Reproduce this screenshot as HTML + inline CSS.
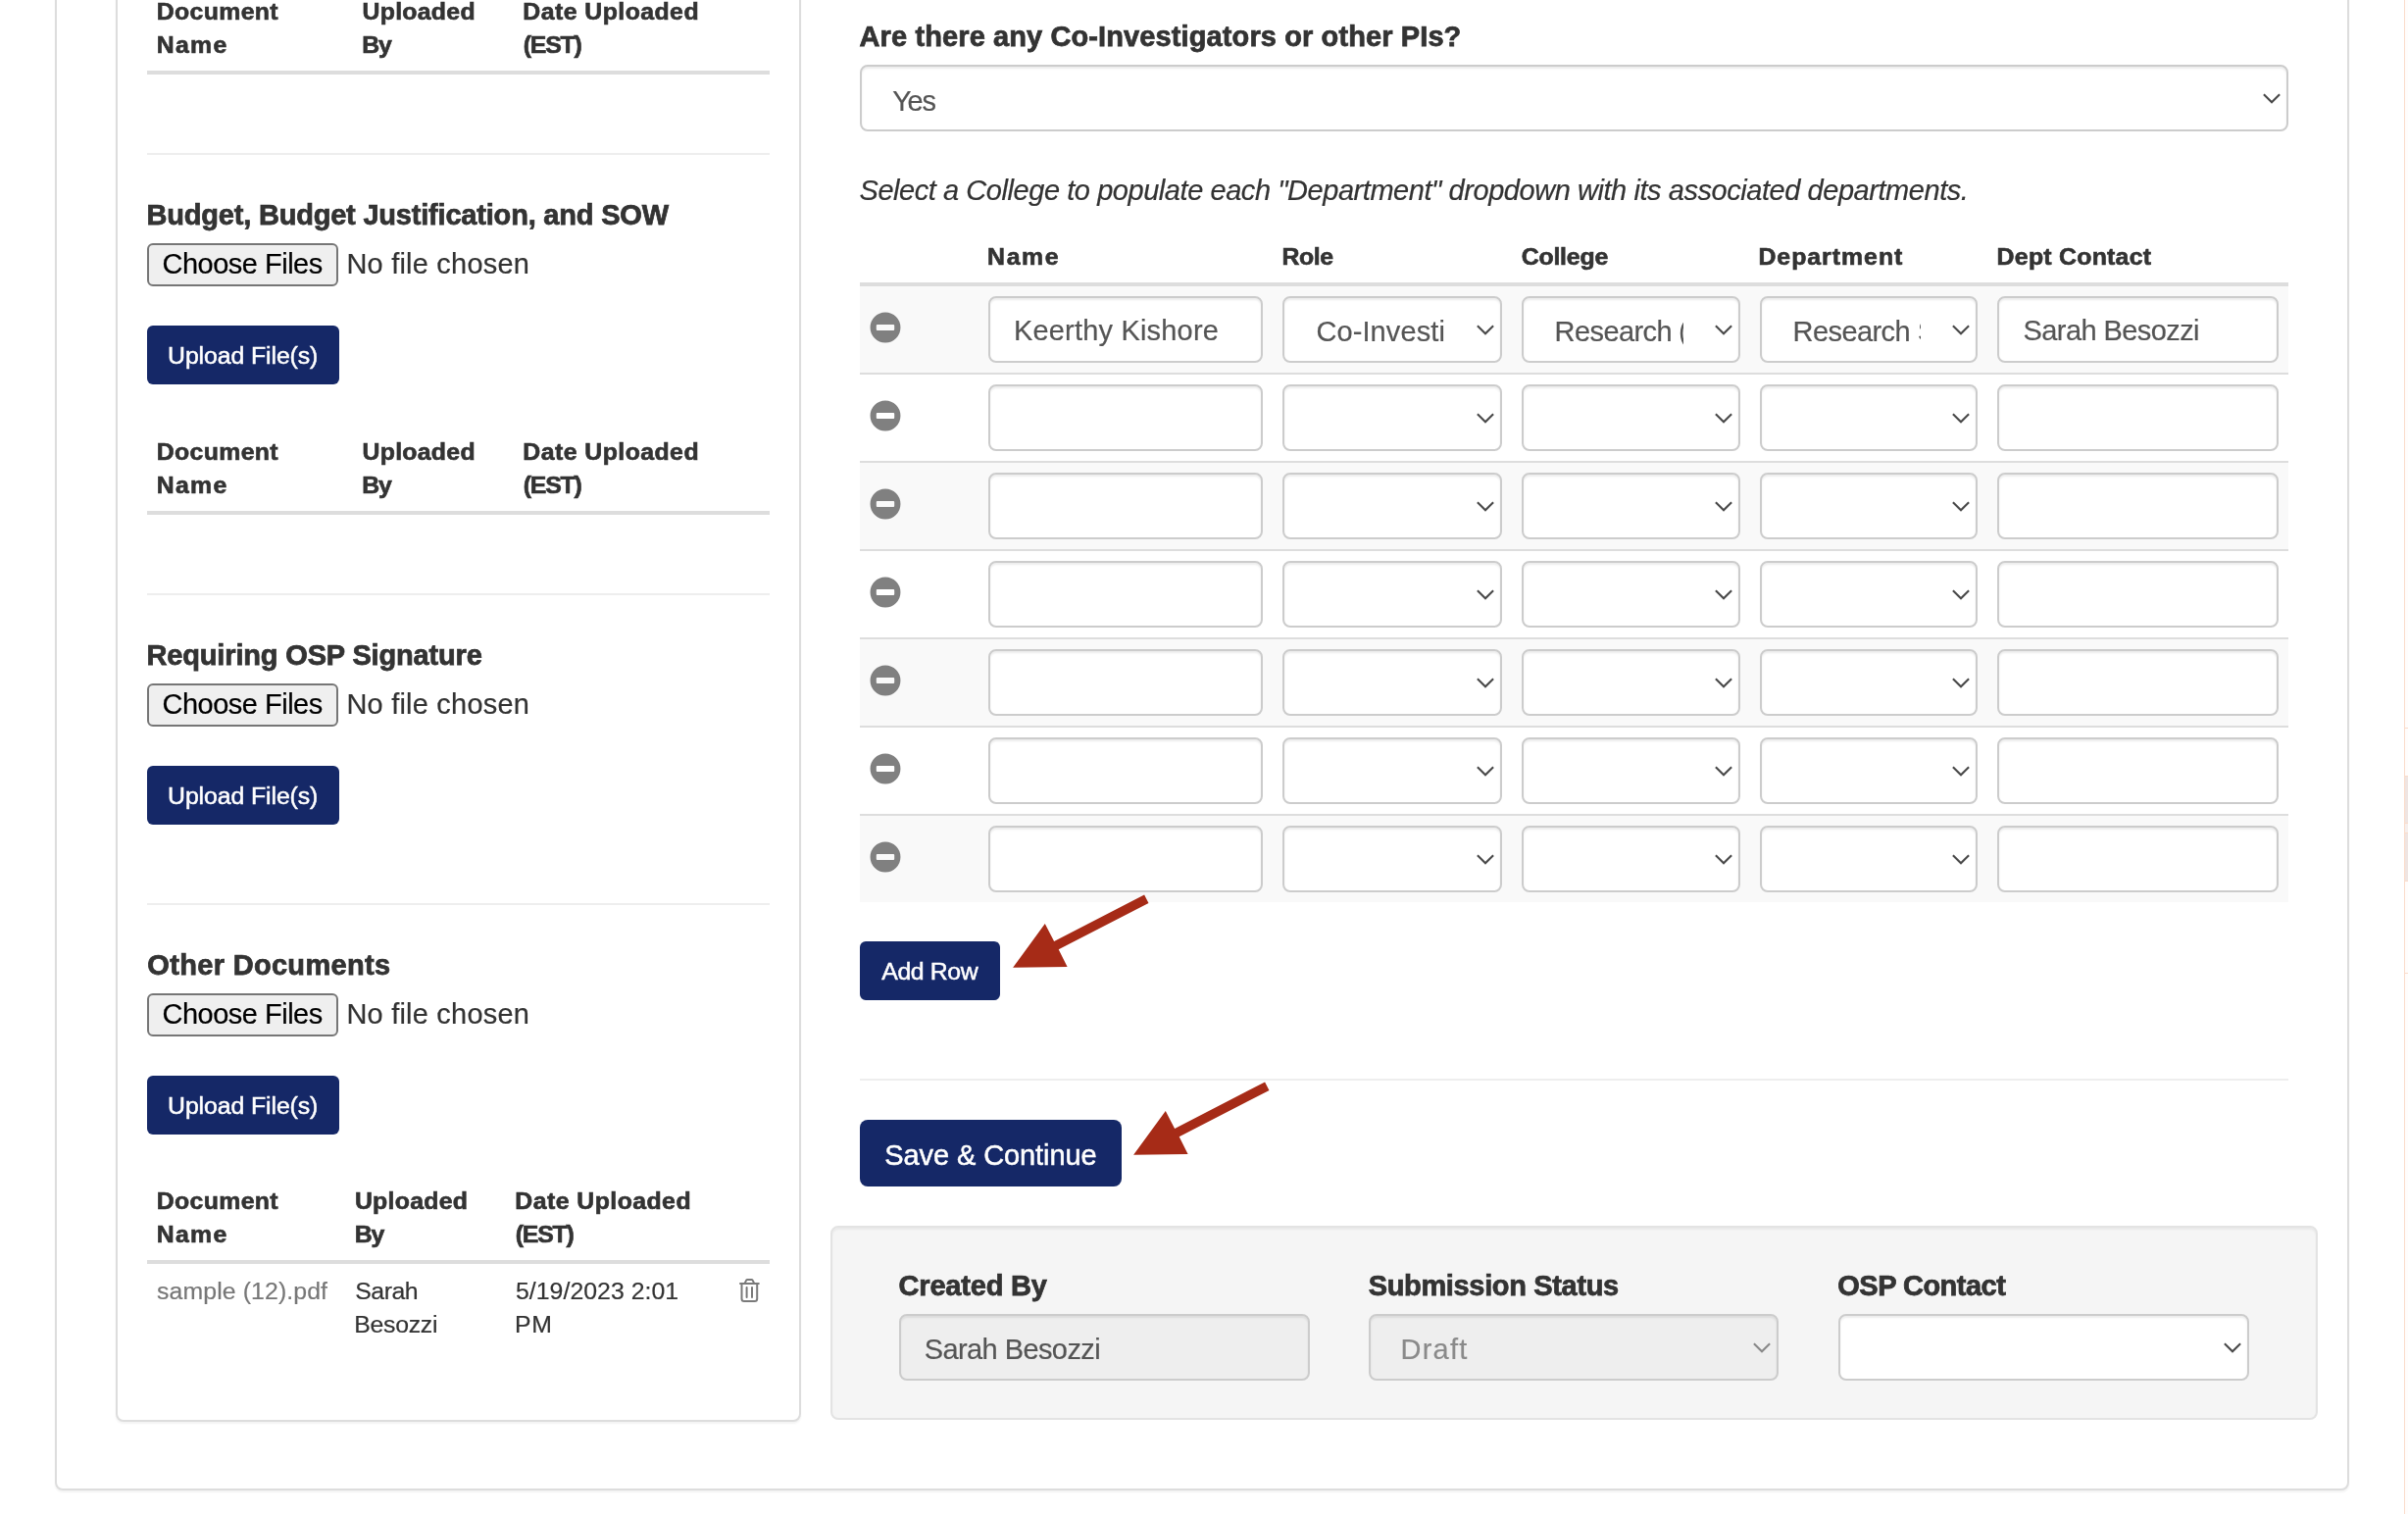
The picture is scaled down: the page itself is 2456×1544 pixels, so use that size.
<!DOCTYPE html>
<html lang="en"><head><meta charset="utf-8"><title>Proposal form</title>
<style>
html,body{margin:0;padding:0;background:#fff;font-family:"Liberation Sans",sans-serif;}
body{width:2456px;height:1544px;position:relative;overflow:hidden;font-family:"Liberation Sans",sans-serif;}
div,span.t,svg.a{position:absolute;box-sizing:border-box;}
#w{left:0;top:0;width:2456px;height:1544px;will-change:transform;}
.t{white-space:pre;line-height:40px;height:40px;}
.panel{background:#fff;border:2px solid #ddd;border-radius:8px;box-shadow:0 2px 2px rgba(0,0,0,.05);}
.inp{background:#fff;border:2px solid #ccc;border-radius:8px;box-shadow:inset 0 2px 2px rgba(0,0,0,.075);}
.inp.dis{background:#eee;}
.chev{position:absolute;right:4px;top:25.8px;}
.btn{background:#152867;}
.filebtn{background:#efefef;border:2px solid #767676;border-radius:6px;}
.well{background:#f5f5f5;border:2px solid #e3e3e3;border-radius:8px;box-shadow:inset 0 2px 2px rgba(0,0,0,.05);}
.clip{overflow:hidden;}
</style></head>
<body>
<div id="w">
<div class="panel" style="left:56px;top:-40px;width:2340px;height:1560px;"></div>
<div class="panel" style="left:118px;top:-40px;width:699px;height:1490px;"></div>
<span class="t" style="left:159.72px;top:-8.01px;font-size:24.84px;color:#333;letter-spacing:0.360px;font-weight:bold;-webkit-text-stroke:0.65px;">Document</span>
<span class="t" style="left:159.72px;top:25.79px;font-size:24.84px;color:#333;letter-spacing:1.286px;font-weight:bold;-webkit-text-stroke:0.65px;">Name</span>
<span class="t" style="left:369.51px;top:-8.01px;font-size:24.84px;color:#333;letter-spacing:0.280px;font-weight:bold;-webkit-text-stroke:0.65px;">Uploaded</span>
<span class="t" style="left:369.32px;top:25.79px;font-size:24.84px;color:#333;letter-spacing:-1.200px;font-weight:bold;-webkit-text-stroke:0.65px;">By</span>
<span class="t" style="left:533.32px;top:-8.01px;font-size:24.84px;color:#333;letter-spacing:0.451px;font-weight:bold;-webkit-text-stroke:0.65px;">Date Uploaded</span>
<span class="t" style="left:533.76px;top:25.79px;font-size:24.84px;color:#333;letter-spacing:-1.200px;font-weight:bold;-webkit-text-stroke:0.65px;">(EST)</span>
<div style="left:150px;top:72px;width:635px;height:4px;background:#ddd;"></div>
<div style="left:150px;top:156px;width:635px;height:2px;background:#eee;"></div>
<span class="t" style="left:149.54px;top:199.16px;font-size:28.98px;color:#333;letter-spacing:-0.185px;font-weight:bold;-webkit-text-stroke:0.75px;">Budget, Budget Justification, and SOW</span>
<div class="filebtn" style="left:150px;top:248px;width:195px;height:44px;"></div>
<span class="t" style="left:165.55px;top:249.26px;font-size:28.98px;color:#000;letter-spacing:-0.494px;-webkit-text-stroke:0.2px;">Choose Files</span>
<span class="t" style="left:353.41px;top:249.26px;font-size:28.98px;color:#333;letter-spacing:0.224px;-webkit-text-stroke:0.2px;">No file chosen</span>
<div class="btn" style="left:150px;top:332px;width:196px;height:60px;border-radius:6px;"></div>
<span class="t" style="left:171.07px;top:342.89px;font-size:24.84px;color:#fff;letter-spacing:-0.093px;-webkit-text-stroke:0.2px;-webkit-text-stroke:0.5px;">Upload File(s)</span>
<span class="t" style="left:159.72px;top:440.99px;font-size:24.84px;color:#333;letter-spacing:0.360px;font-weight:bold;-webkit-text-stroke:0.65px;">Document</span>
<span class="t" style="left:159.72px;top:474.79px;font-size:24.84px;color:#333;letter-spacing:1.286px;font-weight:bold;-webkit-text-stroke:0.65px;">Name</span>
<span class="t" style="left:369.51px;top:440.99px;font-size:24.84px;color:#333;letter-spacing:0.280px;font-weight:bold;-webkit-text-stroke:0.65px;">Uploaded</span>
<span class="t" style="left:369.32px;top:474.79px;font-size:24.84px;color:#333;letter-spacing:-1.200px;font-weight:bold;-webkit-text-stroke:0.65px;">By</span>
<span class="t" style="left:533.32px;top:440.99px;font-size:24.84px;color:#333;letter-spacing:0.451px;font-weight:bold;-webkit-text-stroke:0.65px;">Date Uploaded</span>
<span class="t" style="left:533.76px;top:474.79px;font-size:24.84px;color:#333;letter-spacing:-1.200px;font-weight:bold;-webkit-text-stroke:0.65px;">(EST)</span>
<div style="left:150px;top:521px;width:635px;height:4px;background:#ddd;"></div>
<div style="left:150px;top:605px;width:635px;height:2px;background:#eee;"></div>
<span class="t" style="left:149.54px;top:648.16px;font-size:28.98px;color:#333;letter-spacing:-0.148px;font-weight:bold;-webkit-text-stroke:0.75px;">Requiring OSP Signature</span>
<div class="filebtn" style="left:150px;top:697px;width:195px;height:44px;"></div>
<span class="t" style="left:165.55px;top:698.26px;font-size:28.98px;color:#000;letter-spacing:-0.494px;-webkit-text-stroke:0.2px;">Choose Files</span>
<span class="t" style="left:353.41px;top:698.26px;font-size:28.98px;color:#333;letter-spacing:0.224px;-webkit-text-stroke:0.2px;">No file chosen</span>
<div class="btn" style="left:150px;top:781px;width:196px;height:60px;border-radius:6px;"></div>
<span class="t" style="left:171.07px;top:791.89px;font-size:24.84px;color:#fff;letter-spacing:-0.093px;-webkit-text-stroke:0.2px;-webkit-text-stroke:0.5px;">Upload File(s)</span>
<div style="left:150px;top:921px;width:635px;height:2px;background:#eee;"></div>
<span class="t" style="left:150.34px;top:964.16px;font-size:28.98px;color:#333;letter-spacing:0.334px;font-weight:bold;-webkit-text-stroke:0.75px;">Other Documents</span>
<div class="filebtn" style="left:150px;top:1013px;width:195px;height:44px;"></div>
<span class="t" style="left:165.55px;top:1014.26px;font-size:28.98px;color:#000;letter-spacing:-0.494px;-webkit-text-stroke:0.2px;">Choose Files</span>
<span class="t" style="left:353.41px;top:1014.26px;font-size:28.98px;color:#333;letter-spacing:0.224px;-webkit-text-stroke:0.2px;">No file chosen</span>
<div class="btn" style="left:150px;top:1097px;width:196px;height:60px;border-radius:6px;"></div>
<span class="t" style="left:171.07px;top:1107.89px;font-size:24.84px;color:#fff;letter-spacing:-0.093px;-webkit-text-stroke:0.2px;-webkit-text-stroke:0.5px;">Upload File(s)</span>
<span class="t" style="left:159.72px;top:1204.99px;font-size:24.84px;color:#333;letter-spacing:0.360px;font-weight:bold;-webkit-text-stroke:0.65px;">Document</span>
<span class="t" style="left:159.72px;top:1238.79px;font-size:24.84px;color:#333;letter-spacing:1.286px;font-weight:bold;-webkit-text-stroke:0.65px;">Name</span>
<span class="t" style="left:361.91px;top:1204.99px;font-size:24.84px;color:#333;letter-spacing:0.280px;font-weight:bold;-webkit-text-stroke:0.65px;">Uploaded</span>
<span class="t" style="left:361.72px;top:1238.79px;font-size:24.84px;color:#333;letter-spacing:-1.200px;font-weight:bold;-webkit-text-stroke:0.65px;">By</span>
<span class="t" style="left:525.32px;top:1204.99px;font-size:24.84px;color:#333;letter-spacing:0.451px;font-weight:bold;-webkit-text-stroke:0.65px;">Date Uploaded</span>
<span class="t" style="left:525.76px;top:1238.79px;font-size:24.84px;color:#333;letter-spacing:-1.200px;font-weight:bold;-webkit-text-stroke:0.65px;">(EST)</span>
<div style="left:150px;top:1285px;width:635px;height:4px;background:#ddd;"></div>
<span class="t" style="left:160.12px;top:1296.89px;font-size:24.84px;color:#777;letter-spacing:0.096px;-webkit-text-stroke:0.2px;">sample (12).pdf</span>
<span class="t" style="left:362.28px;top:1296.89px;font-size:24.84px;color:#333;letter-spacing:-0.498px;-webkit-text-stroke:0.2px;">Sarah</span>
<span class="t" style="left:361.35px;top:1331.19px;font-size:24.84px;color:#333;letter-spacing:-0.313px;-webkit-text-stroke:0.2px;">Besozzi</span>
<span class="t" style="left:526.01px;top:1296.89px;font-size:24.84px;color:#333;letter-spacing:0.033px;-webkit-text-stroke:0.2px;">5/19/2023 2:01</span>
<span class="t" style="left:524.95px;top:1331.19px;font-size:24.84px;color:#333;letter-spacing:0.639px;-webkit-text-stroke:0.2px;">PM</span>
<svg class="a" style="left:750px;top:1300px" width="30" height="32" viewBox="750 1300 30 32" fill="none" stroke="#7a7a7a" stroke-width="2" stroke-linecap="round" stroke-linejoin="round">
<path d="M755 1309H773.8"/><path d="M756.5 1309V1324.4a2.5 2.5 0 0 0 2.5 2.5H769.7a2.5 2.5 0 0 0 2.5-2.5V1309"/>
<path d="M759.6 1308.6L761.2 1305.6Q761.6 1305 762.4 1305H766.4Q767.2 1305 767.6 1305.6L769.2 1308.6"/>
<path d="M761.6 1313V1323"/><path d="M767 1313V1323"/></svg>
<span class="t" style="left:876.58px;top:16.76px;font-size:28.98px;color:#333;letter-spacing:0.122px;font-weight:bold;-webkit-text-stroke:0.75px;">Are there any Co-Investigators or other PIs?</span>
<div class="inp" style="left:877px;top:66px;width:1457px;height:68px;"><svg class="chev" width="22" height="14" viewBox="0 0 22 14"><path d="M2.9 2.2L11 10.3L19.1 2.2" fill="none" stroke="#494949" stroke-width="2.1"/></svg></div>
<span class="t" style="left:910.15px;top:82.56px;font-size:28.98px;color:#555;letter-spacing:-1.200px;-webkit-text-stroke:0.2px;">Yes</span>
<span class="t" style="left:876.50px;top:173.86px;font-size:28.98px;color:#333;letter-spacing:-0.429px;font-style:italic;-webkit-text-stroke:0.2px;">Select a College to populate each &quot;Department&quot; dropdown with its associated departments.</span>
<span class="t" style="left:1007.12px;top:241.59px;font-size:24.84px;color:#333;letter-spacing:1.619px;font-weight:bold;-webkit-text-stroke:0.65px;">Name</span>
<span class="t" style="left:1307.52px;top:241.59px;font-size:24.84px;color:#333;letter-spacing:-0.432px;font-weight:bold;-webkit-text-stroke:0.65px;">Role</span>
<span class="t" style="left:1551.71px;top:241.59px;font-size:24.84px;color:#333;letter-spacing:-0.195px;font-weight:bold;-webkit-text-stroke:0.65px;">College</span>
<span class="t" style="left:1793.42px;top:241.59px;font-size:24.84px;color:#333;letter-spacing:0.993px;font-weight:bold;-webkit-text-stroke:0.65px;">Department</span>
<span class="t" style="left:2036.62px;top:241.59px;font-size:24.84px;color:#333;letter-spacing:0.265px;font-weight:bold;-webkit-text-stroke:0.65px;">Dept Contact</span>
<div style="left:877px;top:288px;width:1457px;height:4px;background:#ddd;"></div>
<div style="left:877px;top:292px;width:1457px;height:88px;background:#f9f9f9;"></div>
<svg class="a" style="left:886.65px;top:317.75px" width="32" height="32" viewBox="0 0 32 32"><path fill="#808080" fill-rule="evenodd" d="M16 0.55a15.45 15.45 0 1 0 0 30.9a15.45 15.45 0 1 0 0-30.9zM7.8 13.1h16.4a1 1 0 0 1 1 1v3.8a1 1 0 0 1-1 1H7.8a1 1 0 0 1-1-1v-3.8a1 1 0 0 1 1-1z"/></svg>
<div class="inp" style="left:1008px;top:302px;width:280px;height:68px;"></div>
<div class="inp" style="left:1308px;top:302px;width:224px;height:68px;"><svg class="chev" width="22" height="14" viewBox="0 0 22 14"><path d="M2.9 2.2L11 10.3L19.1 2.2" fill="none" stroke="#494949" stroke-width="2.1"/></svg></div>
<div class="inp" style="left:1552px;top:302px;width:223px;height:68px;"><svg class="chev" width="22" height="14" viewBox="0 0 22 14"><path d="M2.9 2.2L11 10.3L19.1 2.2" fill="none" stroke="#494949" stroke-width="2.1"/></svg></div>
<div class="inp" style="left:1795px;top:302px;width:222px;height:68px;"><svg class="chev" width="22" height="14" viewBox="0 0 22 14"><path d="M2.9 2.2L11 10.3L19.1 2.2" fill="none" stroke="#494949" stroke-width="2.1"/></svg></div>
<div class="inp" style="left:2037px;top:302px;width:287px;height:68px;"></div>
<div style="left:877px;top:380px;width:1457px;height:2px;background:#ddd;"></div>
<svg class="a" style="left:886.65px;top:407.75px" width="32" height="32" viewBox="0 0 32 32"><path fill="#808080" fill-rule="evenodd" d="M16 0.55a15.45 15.45 0 1 0 0 30.9a15.45 15.45 0 1 0 0-30.9zM7.8 13.1h16.4a1 1 0 0 1 1 1v3.8a1 1 0 0 1-1 1H7.8a1 1 0 0 1-1-1v-3.8a1 1 0 0 1 1-1z"/></svg>
<div class="inp" style="left:1008px;top:392px;width:280px;height:68px;"></div>
<div class="inp" style="left:1308px;top:392px;width:224px;height:68px;"><svg class="chev" width="22" height="14" viewBox="0 0 22 14"><path d="M2.9 2.2L11 10.3L19.1 2.2" fill="none" stroke="#494949" stroke-width="2.1"/></svg></div>
<div class="inp" style="left:1552px;top:392px;width:223px;height:68px;"><svg class="chev" width="22" height="14" viewBox="0 0 22 14"><path d="M2.9 2.2L11 10.3L19.1 2.2" fill="none" stroke="#494949" stroke-width="2.1"/></svg></div>
<div class="inp" style="left:1795px;top:392px;width:222px;height:68px;"><svg class="chev" width="22" height="14" viewBox="0 0 22 14"><path d="M2.9 2.2L11 10.3L19.1 2.2" fill="none" stroke="#494949" stroke-width="2.1"/></svg></div>
<div class="inp" style="left:2037px;top:392px;width:287px;height:68px;"></div>
<div style="left:877px;top:470px;width:1457px;height:2px;background:#ddd;"></div>
<div style="left:877px;top:472px;width:1457px;height:88px;background:#f9f9f9;"></div>
<svg class="a" style="left:886.65px;top:497.75px" width="32" height="32" viewBox="0 0 32 32"><path fill="#808080" fill-rule="evenodd" d="M16 0.55a15.45 15.45 0 1 0 0 30.9a15.45 15.45 0 1 0 0-30.9zM7.8 13.1h16.4a1 1 0 0 1 1 1v3.8a1 1 0 0 1-1 1H7.8a1 1 0 0 1-1-1v-3.8a1 1 0 0 1 1-1z"/></svg>
<div class="inp" style="left:1008px;top:482px;width:280px;height:68px;"></div>
<div class="inp" style="left:1308px;top:482px;width:224px;height:68px;"><svg class="chev" width="22" height="14" viewBox="0 0 22 14"><path d="M2.9 2.2L11 10.3L19.1 2.2" fill="none" stroke="#494949" stroke-width="2.1"/></svg></div>
<div class="inp" style="left:1552px;top:482px;width:223px;height:68px;"><svg class="chev" width="22" height="14" viewBox="0 0 22 14"><path d="M2.9 2.2L11 10.3L19.1 2.2" fill="none" stroke="#494949" stroke-width="2.1"/></svg></div>
<div class="inp" style="left:1795px;top:482px;width:222px;height:68px;"><svg class="chev" width="22" height="14" viewBox="0 0 22 14"><path d="M2.9 2.2L11 10.3L19.1 2.2" fill="none" stroke="#494949" stroke-width="2.1"/></svg></div>
<div class="inp" style="left:2037px;top:482px;width:287px;height:68px;"></div>
<div style="left:877px;top:560px;width:1457px;height:2px;background:#ddd;"></div>
<svg class="a" style="left:886.65px;top:587.75px" width="32" height="32" viewBox="0 0 32 32"><path fill="#808080" fill-rule="evenodd" d="M16 0.55a15.45 15.45 0 1 0 0 30.9a15.45 15.45 0 1 0 0-30.9zM7.8 13.1h16.4a1 1 0 0 1 1 1v3.8a1 1 0 0 1-1 1H7.8a1 1 0 0 1-1-1v-3.8a1 1 0 0 1 1-1z"/></svg>
<div class="inp" style="left:1008px;top:572px;width:280px;height:68px;"></div>
<div class="inp" style="left:1308px;top:572px;width:224px;height:68px;"><svg class="chev" width="22" height="14" viewBox="0 0 22 14"><path d="M2.9 2.2L11 10.3L19.1 2.2" fill="none" stroke="#494949" stroke-width="2.1"/></svg></div>
<div class="inp" style="left:1552px;top:572px;width:223px;height:68px;"><svg class="chev" width="22" height="14" viewBox="0 0 22 14"><path d="M2.9 2.2L11 10.3L19.1 2.2" fill="none" stroke="#494949" stroke-width="2.1"/></svg></div>
<div class="inp" style="left:1795px;top:572px;width:222px;height:68px;"><svg class="chev" width="22" height="14" viewBox="0 0 22 14"><path d="M2.9 2.2L11 10.3L19.1 2.2" fill="none" stroke="#494949" stroke-width="2.1"/></svg></div>
<div class="inp" style="left:2037px;top:572px;width:287px;height:68px;"></div>
<div style="left:877px;top:650px;width:1457px;height:2px;background:#ddd;"></div>
<div style="left:877px;top:652px;width:1457px;height:88px;background:#f9f9f9;"></div>
<svg class="a" style="left:886.65px;top:677.75px" width="32" height="32" viewBox="0 0 32 32"><path fill="#808080" fill-rule="evenodd" d="M16 0.55a15.45 15.45 0 1 0 0 30.9a15.45 15.45 0 1 0 0-30.9zM7.8 13.1h16.4a1 1 0 0 1 1 1v3.8a1 1 0 0 1-1 1H7.8a1 1 0 0 1-1-1v-3.8a1 1 0 0 1 1-1z"/></svg>
<div class="inp" style="left:1008px;top:662px;width:280px;height:68px;"></div>
<div class="inp" style="left:1308px;top:662px;width:224px;height:68px;"><svg class="chev" width="22" height="14" viewBox="0 0 22 14"><path d="M2.9 2.2L11 10.3L19.1 2.2" fill="none" stroke="#494949" stroke-width="2.1"/></svg></div>
<div class="inp" style="left:1552px;top:662px;width:223px;height:68px;"><svg class="chev" width="22" height="14" viewBox="0 0 22 14"><path d="M2.9 2.2L11 10.3L19.1 2.2" fill="none" stroke="#494949" stroke-width="2.1"/></svg></div>
<div class="inp" style="left:1795px;top:662px;width:222px;height:68px;"><svg class="chev" width="22" height="14" viewBox="0 0 22 14"><path d="M2.9 2.2L11 10.3L19.1 2.2" fill="none" stroke="#494949" stroke-width="2.1"/></svg></div>
<div class="inp" style="left:2037px;top:662px;width:287px;height:68px;"></div>
<div style="left:877px;top:740px;width:1457px;height:2px;background:#ddd;"></div>
<svg class="a" style="left:886.65px;top:767.75px" width="32" height="32" viewBox="0 0 32 32"><path fill="#808080" fill-rule="evenodd" d="M16 0.55a15.45 15.45 0 1 0 0 30.9a15.45 15.45 0 1 0 0-30.9zM7.8 13.1h16.4a1 1 0 0 1 1 1v3.8a1 1 0 0 1-1 1H7.8a1 1 0 0 1-1-1v-3.8a1 1 0 0 1 1-1z"/></svg>
<div class="inp" style="left:1008px;top:752px;width:280px;height:68px;"></div>
<div class="inp" style="left:1308px;top:752px;width:224px;height:68px;"><svg class="chev" width="22" height="14" viewBox="0 0 22 14"><path d="M2.9 2.2L11 10.3L19.1 2.2" fill="none" stroke="#494949" stroke-width="2.1"/></svg></div>
<div class="inp" style="left:1552px;top:752px;width:223px;height:68px;"><svg class="chev" width="22" height="14" viewBox="0 0 22 14"><path d="M2.9 2.2L11 10.3L19.1 2.2" fill="none" stroke="#494949" stroke-width="2.1"/></svg></div>
<div class="inp" style="left:1795px;top:752px;width:222px;height:68px;"><svg class="chev" width="22" height="14" viewBox="0 0 22 14"><path d="M2.9 2.2L11 10.3L19.1 2.2" fill="none" stroke="#494949" stroke-width="2.1"/></svg></div>
<div class="inp" style="left:2037px;top:752px;width:287px;height:68px;"></div>
<div style="left:877px;top:830px;width:1457px;height:2px;background:#ddd;"></div>
<div style="left:877px;top:832px;width:1457px;height:88px;background:#f9f9f9;"></div>
<svg class="a" style="left:886.65px;top:857.75px" width="32" height="32" viewBox="0 0 32 32"><path fill="#808080" fill-rule="evenodd" d="M16 0.55a15.45 15.45 0 1 0 0 30.9a15.45 15.45 0 1 0 0-30.9zM7.8 13.1h16.4a1 1 0 0 1 1 1v3.8a1 1 0 0 1-1 1H7.8a1 1 0 0 1-1-1v-3.8a1 1 0 0 1 1-1z"/></svg>
<div class="inp" style="left:1008px;top:842px;width:280px;height:68px;"></div>
<div class="inp" style="left:1308px;top:842px;width:224px;height:68px;"><svg class="chev" width="22" height="14" viewBox="0 0 22 14"><path d="M2.9 2.2L11 10.3L19.1 2.2" fill="none" stroke="#494949" stroke-width="2.1"/></svg></div>
<div class="inp" style="left:1552px;top:842px;width:223px;height:68px;"><svg class="chev" width="22" height="14" viewBox="0 0 22 14"><path d="M2.9 2.2L11 10.3L19.1 2.2" fill="none" stroke="#494949" stroke-width="2.1"/></svg></div>
<div class="inp" style="left:1795px;top:842px;width:222px;height:68px;"><svg class="chev" width="22" height="14" viewBox="0 0 22 14"><path d="M2.9 2.2L11 10.3L19.1 2.2" fill="none" stroke="#494949" stroke-width="2.1"/></svg></div>
<div class="inp" style="left:2037px;top:842px;width:287px;height:68px;"></div>
<span class="t" style="left:1033.91px;top:317.46px;font-size:28.98px;color:#555;letter-spacing:0.202px;-webkit-text-stroke:0.2px;">Keerthy Kishore</span>
<span class="t" style="left:1342.45px;top:317.86px;font-size:28.98px;color:#555;letter-spacing:0.114px;-webkit-text-stroke:0.2px;">Co-Investi</span>
<span class="t" style="left:1585.61px;top:317.86px;font-size:28.98px;color:#555;letter-spacing:-0.580px;-webkit-text-stroke:0.2px;">Research</span>
<div class="clip" style="left:1709.80px;top:317.86px;width:7.40px;height:40px"><span class="t" style="left:2.19px;top:0;font-size:28.98px;color:#555">(</span></div>
<span class="t" style="left:1828.61px;top:317.86px;font-size:28.98px;color:#555;letter-spacing:-0.580px;-webkit-text-stroke:0.2px;">Research</span>
<div class="clip" style="left:1953.00px;top:317.86px;width:6.30px;height:40px"><span class="t" style="left:2.70px;top:0;font-size:28.98px;color:#555">S</span></div>
<span class="t" style="left:2063.50px;top:317.46px;font-size:28.98px;color:#555;letter-spacing:-0.566px;-webkit-text-stroke:0.2px;">Sarah Besozzi</span>
<div class="btn" style="left:877px;top:960px;width:143px;height:60px;border-radius:6px;"></div>
<span class="t" style="left:899.24px;top:970.89px;font-size:24.84px;color:#fff;letter-spacing:-0.398px;-webkit-text-stroke:0.2px;-webkit-text-stroke:0.5px;">Add Row</span>
<div style="left:877px;top:1100px;width:1457px;height:2px;background:#eee;"></div>
<div class="btn" style="left:877px;top:1142px;width:267px;height:68px;border-radius:8px;"></div>
<span class="t" style="left:902.20px;top:1157.86px;font-size:28.98px;color:#fff;letter-spacing:-0.069px;-webkit-text-stroke:0.2px;-webkit-text-stroke:0.5px;">Save &amp; Continue</span>
<svg class="a" style="left:0;top:0" width="2456" height="1544" viewBox="0 0 2456 1544"><polygon points="1033.1,986.8 1065.8,942.1 1075.1,959.9 1167.1,912.5 1171.5,920.9 1079.7,968.3 1088.6,986.0" fill="#a62b17"/></svg>
<svg class="a" style="left:0;top:0" width="2456" height="1544" viewBox="0 0 2456 1544"><polygon points="1156.1,1177.8 1188.8,1133.1 1198.1,1150.9 1290.1,1103.5 1294.5,1111.9 1202.7,1159.3 1211.6,1177.0" fill="#a62b17"/></svg>
<div class="well" style="left:847px;top:1250px;width:1517px;height:198px;"></div>
<span class="t" style="left:916.54px;top:1291.26px;font-size:28.98px;color:#333;letter-spacing:-0.168px;font-weight:bold;-webkit-text-stroke:0.75px;">Created By</span>
<span class="t" style="left:1395.73px;top:1291.26px;font-size:28.98px;color:#333;letter-spacing:-0.331px;font-weight:bold;-webkit-text-stroke:0.75px;">Submission Status</span>
<span class="t" style="left:1874.34px;top:1291.26px;font-size:28.98px;color:#333;letter-spacing:-0.504px;font-weight:bold;-webkit-text-stroke:0.75px;">OSP Contact</span>
<div class="inp dis" style="left:917px;top:1340px;width:419px;height:68px;"></div>
<div class="inp dis" style="left:1396px;top:1340px;width:418px;height:68px;"><svg class="chev" width="22" height="14" viewBox="0 0 22 14"><path d="M2.9 2.2L11 10.3L19.1 2.2" fill="none" stroke="#888" stroke-width="2.1"/></svg></div>
<div class="inp" style="left:1875px;top:1340px;width:419px;height:68px;"><svg class="chev" width="22" height="14" viewBox="0 0 22 14"><path d="M2.9 2.2L11 10.3L19.1 2.2" fill="none" stroke="#494949" stroke-width="2.1"/></svg></div>
<span class="t" style="left:942.70px;top:1355.76px;font-size:28.98px;color:#555;letter-spacing:-0.566px;-webkit-text-stroke:0.2px;">Sarah Besozzi</span>
<span class="t" style="left:1428.61px;top:1356.16px;font-size:28.98px;color:#8a8a8a;letter-spacing:1.199px;-webkit-text-stroke:0.2px;">Draft</span>
<div style="left:2453px;top:0px;width:3px;height:1544px;background:#fffdfc;"></div>
<div style="left:2452px;top:0px;width:1.4px;height:1544px;background:#fbdccb;"></div>
<div style="left:2453px;top:791px;width:3px;height:48px;background:#efe5e2;"></div>
<div style="left:2453px;top:839px;width:3px;height:10px;background:#f6efed;"></div>
<div style="left:2453px;top:849px;width:3px;height:49px;background:#efe5e2;"></div>
<div style="left:2452px;top:741.5px;width:4px;height:1.2px;background:#fbdccb;"></div>
<div style="left:2452px;top:790.5px;width:4px;height:1.2px;background:#fbdccb;"></div>
<div style="left:2452px;top:838.5px;width:4px;height:1.2px;background:#fbdccb;"></div>
<div style="left:2452px;top:848.5px;width:4px;height:1.2px;background:#fbdccb;"></div>
<div style="left:2452px;top:897.5px;width:4px;height:1.2px;background:#fbdccb;"></div>
<div style="left:2452px;top:991.5px;width:4px;height:1.2px;background:#fbdccb;"></div>
</div>
</body></html>
